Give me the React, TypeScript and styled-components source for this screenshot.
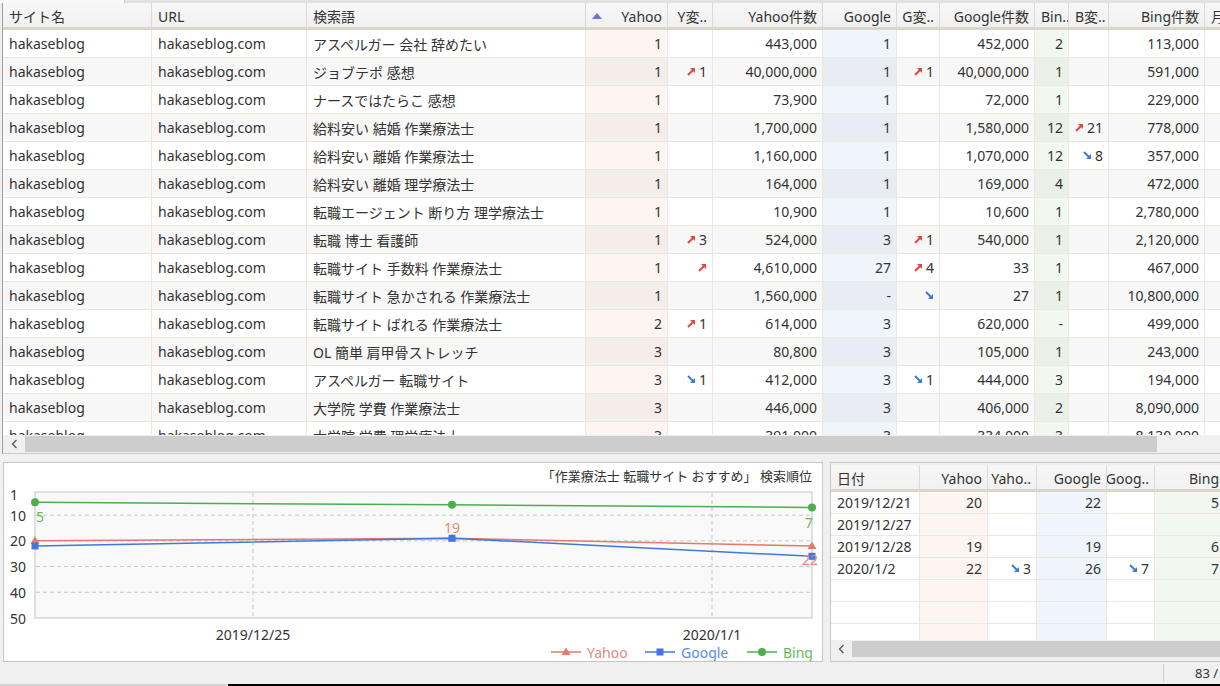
import React from 'react';
import styled, { createGlobalStyle } from 'styled-components';

const GlobalStyle = createGlobalStyle`
  * { box-sizing: border-box; }
  html, body {
    margin: 0;
    padding: 0;
    background: #f0f0f0;
  }
  body {
    font-family: "Noto Sans", "Noto Sans CJK JP", sans-serif;
    font-size: 14px;
    color: #333;
    overflow: hidden;
  }
`;

type Tint = 'none' | 'yahoo' | 'google' | 'bing';
type Change = { dir: 'up' | 'down'; n?: number } | null;

const tintColors: Record<Tint, string> = {
  none: '#ffffff',
  yahoo: '#fdf5f1',
  google: '#f0f4fb',
  bing: '#f2f8ef',
};

const Window = styled.div`
  width: 1220px;
  height: 686px;
  display: flex;
  flex-direction: column;
  background: #f0f0f0;
  overflow: hidden;
`;

const TabStrip = styled.div`
  height: 3px;
  display: flex;
  background: #e2e2e2;
`;

const ActiveTab = styled.div`
  width: 125px;
  background: #fafafa;
  border-right: 1px solid #d0d0d0;
`;

const MainPanel = styled.div`
  height: 451px;
  margin-left: 2px;
  border-left: 1px solid #9f9f9f;
  border-bottom: 1px solid #c8c8c8;
  display: flex;
  flex-direction: column;
`;

const GridClip = styled.div`
  flex: 1;
  overflow: hidden;
  background: #fff;
  min-height: 0;
`;

const Row = styled.div<{ $cols: string; $h: number }>`
  display: grid;
  grid-template-columns: ${p => p.$cols};
  height: ${p => p.$h}px;
`;

const HeaderRow = styled(Row)`
  background: linear-gradient(#f7f7f7, #f1f1f1);
  border-bottom: 3px solid #dad6cb;
`;

const HeadCell = styled.div<{ $align?: 'left' | 'right' }>`
  display: flex;
  align-items: center;
  justify-content: ${p => (p.$align === 'right' ? 'flex-end' : 'flex-start')};
  padding: 2px ${p => (p.$align === 'right' ? '5px' : '6px')} 0;
  border-right: 1px solid #d9d9d9;
  white-space: nowrap;
  overflow: hidden;
  min-width: 0;
`;

const SortHead = styled(HeadCell)`
  justify-content: space-between;
  padding-left: 6px;
`;

const Cell = styled.div<{ $align?: 'left' | 'right'; $tint?: Tint; $stripe?: boolean }>`
  display: flex;
  align-items: center;
  justify-content: ${p => (p.$align === 'right' ? 'flex-end' : 'flex-start')};
  padding: 0 ${p => (p.$align === 'right' ? '5px' : '6px')};
  border-right: 1px solid #ede8df;
  border-bottom: 1px solid #ede8df;
  background-color: ${p => tintColors[p.$tint ?? 'none']};
  background-image: ${p =>
    p.$stripe ? 'linear-gradient(rgba(0,0,0,0.03), rgba(0,0,0,0.03))' : 'none'};
  white-space: nowrap;
  overflow: hidden;
  min-width: 0;
`;

const ChangeWrap = styled.span`
  display: inline-flex;
  align-items: center;
  gap: 3px;
`;

const Scrollbar = styled.div`
  height: 18px;
  flex-shrink: 0;
  display: flex;
  background: #f0f0f0;
`;

const ScrollArrow = styled.div<{ $w: number }>`
  width: ${p => p.$w}px;
  display: flex;
  align-items: center;
  justify-content: center;
`;

const Thumb = styled.div<{ $w?: number }>`
  ${p => (p.$w ? `width: ${p.$w}px;` : 'flex: 1;')}
  margin: 1px 0;
  background: #cdcdcd;
`;

const BottomArea = styled.div`
  height: 200px;
  margin-top: 8px;
  display: flex;
`;

const ChartPanel = styled.div`
  width: 820px;
  margin-left: 3px;
  background: #fff;
  border: 1px solid #c6c6c6;
  flex-shrink: 0;
`;

const SidePanel = styled.div`
  flex: 1;
  min-width: 0;
  margin-left: 7px;
  border: 1px solid #c6c6c6;
  border-right: none;
  padding: 2px 0 3px 0;
  display: flex;
  flex-direction: column;
  overflow: hidden;
`;

const StatusBar = styled.div`
  height: 22px;
  display: flex;
  justify-content: flex-end;
  padding: 2px 0;
`;

const StatusCell = styled.div`
  width: 57px;
  border-left: 1px solid #cfcfcf;
  padding-left: 31px;
  font-size: 13px;
  display: flex;
  align-items: center;
  white-space: nowrap;
`;

const EdgeLine = styled.div`
  height: 2px;
  display: flex;
`;

const EdgeLeft = styled.div`
  width: 228px;
  background: #d6d6d6;
`;

const EdgeRest = styled.div`
  flex: 1;
  background: #000;
`;

const ChangeArrow = ({ dir }: { dir: 'up' | 'down' }) =>
  dir === 'up' ? (
    <svg width="9" height="9" viewBox="0 0 9 9">
      <line x1="1" y1="8" x2="6" y2="3" stroke="#e2473b" strokeWidth="2" />
      <polygon points="3,1 8,1 8,6" fill="#e2473b" />
    </svg>
  ) : (
    <svg width="9" height="9" viewBox="0 0 9 9">
      <line x1="1" y1="1" x2="6" y2="6" stroke="#3a7bd5" strokeWidth="2" />
      <polygon points="8,3 8,8 3,8" fill="#3a7bd5" />
    </svg>
  );

const ChangeValue = ({ c }: { c: Change }) =>
  c ? (
    <ChangeWrap>
      <ChangeArrow dir={c.dir} />
      {c.n !== undefined && <span>{c.n}</span>}
    </ChangeWrap>
  ) : null;

const Chevron = () => (
  <svg width="7" height="10" viewBox="0 0 7 10">
    <polyline points="5.5,1 1.5,5 5.5,9" fill="none" stroke="#555" strokeWidth="1.3" />
  </svg>
);

const SortArrow = () => (
  <svg width="10" height="6" viewBox="0 0 10 6">
    <polygon points="5,0 10,6 0,6" fill="#6d72e6" />
  </svg>
);

const mainCols = '149px 155px 279px 82px 45px 110px 74px 43px 95px 34px 40px 96px 60px';

type MainRow = {
  kw: string;
  y: string; yc: Change; yn: string;
  g: string; gc: Change; gn: string;
  b: string; bc: Change; bn: string;
};

const up = (n?: number): Change => ({ dir: 'up', n });
const down = (n?: number): Change => ({ dir: 'down', n });

const mainRows: MainRow[] = [
  { kw: 'アスペルガー 会社 辞めたい', y: '1', yc: null, yn: '443,000', g: '1', gc: null, gn: '452,000', b: '2', bc: null, bn: '113,000' },
  { kw: 'ジョブテポ 感想', y: '1', yc: up(1), yn: '40,000,000', g: '1', gc: up(1), gn: '40,000,000', b: '1', bc: null, bn: '591,000' },
  { kw: 'ナースではたらこ 感想', y: '1', yc: null, yn: '73,900', g: '1', gc: null, gn: '72,000', b: '1', bc: null, bn: '229,000' },
  { kw: '給料安い 結婚 作業療法士', y: '1', yc: null, yn: '1,700,000', g: '1', gc: null, gn: '1,580,000', b: '12', bc: up(21), bn: '778,000' },
  { kw: '給料安い 離婚 作業療法士', y: '1', yc: null, yn: '1,160,000', g: '1', gc: null, gn: '1,070,000', b: '12', bc: down(8), bn: '357,000' },
  { kw: '給料安い 離婚 理学療法士', y: '1', yc: null, yn: '164,000', g: '1', gc: null, gn: '169,000', b: '4', bc: null, bn: '472,000' },
  { kw: '転職エージェント 断り方 理学療法士', y: '1', yc: null, yn: '10,900', g: '1', gc: null, gn: '10,600', b: '1', bc: null, bn: '2,780,000' },
  { kw: '転職 博士 看護師', y: '1', yc: up(3), yn: '524,000', g: '3', gc: up(1), gn: '540,000', b: '1', bc: null, bn: '2,120,000' },
  { kw: '転職サイト 手数料 作業療法士', y: '1', yc: up(), yn: '4,610,000', g: '27', gc: up(4), gn: '33', b: '1', bc: null, bn: '467,000' },
  { kw: '転職サイト 急かされる 作業療法士', y: '1', yc: null, yn: '1,560,000', g: '-', gc: down(), gn: '27', b: '1', bc: null, bn: '10,800,000' },
  { kw: '転職サイト ばれる 作業療法士', y: '2', yc: up(1), yn: '614,000', g: '3', gc: null, gn: '620,000', b: '-', bc: null, bn: '499,000' },
  { kw: 'OL 簡単 肩甲骨ストレッチ', y: '3', yc: null, yn: '80,800', g: '3', gc: null, gn: '105,000', b: '1', bc: null, bn: '243,000' },
  { kw: 'アスペルガー 転職サイト', y: '3', yc: down(1), yn: '412,000', g: '3', gc: down(1), gn: '444,000', b: '3', bc: null, bn: '194,000' },
  { kw: '大学院 学費 作業療法士', y: '3', yc: null, yn: '446,000', g: '3', gc: null, gn: '406,000', b: '2', bc: null, bn: '8,090,000' },
  { kw: '大学院 学費 理学療法士', y: '3', yc: null, yn: '391,000', g: '3', gc: null, gn: '334,000', b: '3', bc: null, bn: '8,130,000' },
];

const sideCols = '89px 68px 49px 70px 48px 70px 60px';

type SideRow = { date: string; y: string; yc: Change; g: string; gc: Change; b: string };

const sideRows: SideRow[] = [
  { date: '2019/12/21', y: '20', yc: null, g: '22', gc: null, b: '5' },
  { date: '2019/12/27', y: '', yc: null, g: '', gc: null, b: '' },
  { date: '2019/12/28', y: '19', yc: null, g: '19', gc: null, b: '6' },
  { date: '2020/1/2', y: '22', yc: down(3), g: '26', gc: down(7), b: '7' },
  { date: '', y: '', yc: null, g: '', gc: null, b: '' },
  { date: '', y: '', yc: null, g: '', gc: null, b: '' },
  { date: '', y: '', yc: null, g: '', gc: null, b: '' },
];

const rankY = (r: number) => 30 + (r - 1) * (126 / 49);
const pointX = [32, 449, 809];

const series = [
  { name: 'Yahoo', color: '#e5796a', text: '#e8887a', ranks: [20, 19, 22], marker: 'tri' },
  { name: 'Google', color: '#3f78df', text: '#5b8ae6', ranks: [22, 19, 26], marker: 'sq' },
  { name: 'Bing', color: '#4cae4c', text: '#6ab85a', ranks: [5, 6, 7], marker: 'dot' },
];

const Marker = ({ kind, x, y, color }: { kind: string; x: number; y: number; color: string }) => {
  if (kind === 'tri') return <polygon points={`${x},${y - 4.5} ${x - 4.5},${y + 3} ${x + 4.5},${y + 3}`} fill={color} />;
  if (kind === 'sq') return <rect x={x - 3.5} y={y - 3.5} width="7" height="7" fill={color} />;
  return <circle cx={x} cy={y} r="4" fill={color} />;
};

const RankChart = () => (
  <svg width="818" height="198" viewBox="1 1 818 198">
    <text x="809" y="14" textAnchor="end" dominantBaseline="central" fontSize="13" fill="#333">
      「作業療法士 転職サイト おすすめ」 検索順位
    </text>
    <rect x="32" y="30" width="777" height="126" fill="#f9f9f9" stroke="#c4c4c4" />
    {[10, 20, 30, 40].map(r => (
      <line key={r} x1="33" x2="808" y1={rankY(r)} y2={rankY(r)} stroke="#c6c6c6" strokeDasharray="4 3" />
    ))}
    {[250, 709].map(x => (
      <line key={x} x1={x} x2={x} y1="31" y2="155" stroke="#c6c6c6" strokeDasharray="4 3" />
    ))}
    {[1, 10, 20, 30, 40, 50].map(r => (
      <text key={r} x="7" y={r === 1 ? 32 : rankY(r)} dominantBaseline="central" fontSize="14" fill="#333">
        {r}
      </text>
    ))}
    <text x="250" y="172" textAnchor="middle" dominantBaseline="central" fontSize="14" fill="#333">2019/12/25</text>
    <text x="709" y="172" textAnchor="middle" dominantBaseline="central" fontSize="14" fill="#333">2020/1/1</text>
    {series.map(s => (
      <g key={s.name}>
        <polyline
          points={s.ranks.map((r, i) => `${pointX[i]},${rankY(r)}`).join(' ')}
          fill="none"
          stroke={s.color}
          strokeWidth="1.5"
        />
        {s.ranks.map((r, i) => (
          <Marker key={i} kind={s.marker} x={pointX[i]} y={rankY(r)} color={s.color} />
        ))}
      </g>
    ))}
    <text x="33" y="54" dominantBaseline="central" fontSize="14" fill="#6ab85a">5</text>
    <text x="449" y="65" textAnchor="middle" dominantBaseline="central" fontSize="14" fill="#e8887a">19</text>
    <text x="810" y="60" textAnchor="end" dominantBaseline="central" fontSize="14" fill="#6ab85a">7</text>
    <text x="807" y="97" textAnchor="middle" dominantBaseline="central" fontSize="14" fill="#e8887a">22</text>
    {series.map((s, i) => {
      const lx = [548, 642, 744][i];
      return (
        <g key={s.name}>
          <line x1={lx} x2={lx + 30} y1="190" y2="190" stroke={s.color} strokeWidth="1.5" />
          <Marker kind={s.marker} x={lx + 15} y={190} color={s.color} />
          <text x={lx + 36} y="190" dominantBaseline="central" fontSize="14" fill={s.text}>
            {s.name}
          </text>
        </g>
      );
    })}
  </svg>
);

const App: React.FC = () => {
  return (
    <Window>
      <GlobalStyle />
      <TabStrip>
        <ActiveTab />
      </TabStrip>

      <MainPanel>
        <GridClip>
          <HeaderRow $cols={mainCols} $h={27}>
            <HeadCell>サイト名</HeadCell>
            <HeadCell>URL</HeadCell>
            <HeadCell>検索語</HeadCell>
            <SortHead $align="right">
              <SortArrow />
              <span>Yahoo</span>
            </SortHead>
            <HeadCell $align="right">Y変..</HeadCell>
            <HeadCell $align="right">Yahoo件数</HeadCell>
            <HeadCell $align="right">Google</HeadCell>
            <HeadCell $align="right">G変..</HeadCell>
            <HeadCell $align="right">Google件数</HeadCell>
            <HeadCell>Bin..</HeadCell>
            <HeadCell>B変..</HeadCell>
            <HeadCell $align="right">Bing件数</HeadCell>
            <HeadCell>月</HeadCell>
          </HeaderRow>
          {mainRows.map((r, i) => {
            const s = i % 2 === 1;
            return (
              <Row key={i} $cols={mainCols} $h={28}>
                <Cell $stripe={s}>hakaseblog</Cell>
                <Cell $stripe={s}>hakaseblog.com</Cell>
                <Cell $stripe={s}>{r.kw}</Cell>
                <Cell $stripe={s} $align="right" $tint="yahoo">{r.y}</Cell>
                <Cell $stripe={s} $align="right"><ChangeValue c={r.yc} /></Cell>
                <Cell $stripe={s} $align="right">{r.yn}</Cell>
                <Cell $stripe={s} $align="right" $tint="google">{r.g}</Cell>
                <Cell $stripe={s} $align="right"><ChangeValue c={r.gc} /></Cell>
                <Cell $stripe={s} $align="right">{r.gn}</Cell>
                <Cell $stripe={s} $align="right" $tint="bing">{r.b}</Cell>
                <Cell $stripe={s} $align="right"><ChangeValue c={r.bc} /></Cell>
                <Cell $stripe={s} $align="right">{r.bn}</Cell>
                <Cell $stripe={s} />
              </Row>
            );
          })}
        </GridClip>
        <Scrollbar>
          <ScrollArrow $w={22}><Chevron /></ScrollArrow>
          <Thumb $w={1132} />
        </Scrollbar>
      </MainPanel>

      <BottomArea>
        <ChartPanel>
          <RankChart />
        </ChartPanel>
        <SidePanel>
          <GridClip>
            <HeaderRow $cols={sideCols} $h={27}>
              <HeadCell>日付</HeadCell>
              <HeadCell $align="right">Yahoo</HeadCell>
              <HeadCell $align="right">Yaho..</HeadCell>
              <HeadCell $align="right">Google</HeadCell>
              <HeadCell $align="right">Goog..</HeadCell>
              <HeadCell $align="right">Bing</HeadCell>
              <HeadCell />
            </HeaderRow>
            {sideRows.map((r, i) => (
              <Row key={i} $cols={sideCols} $h={22}>
                <Cell>{r.date}</Cell>
                <Cell $align="right" $tint="yahoo">{r.y}</Cell>
                <Cell $align="right"><ChangeValue c={r.yc} /></Cell>
                <Cell $align="right" $tint="google">{r.g}</Cell>
                <Cell $align="right"><ChangeValue c={r.gc} /></Cell>
                <Cell $align="right" $tint="bing">{r.b}</Cell>
                <Cell />
              </Row>
            ))}
          </GridClip>
          <Scrollbar>
            <ScrollArrow $w={21}><Chevron /></ScrollArrow>
            <Thumb />
          </Scrollbar>
        </SidePanel>
      </BottomArea>

      <StatusBar>
        <StatusCell>83 /</StatusCell>
      </StatusBar>
      <EdgeLine>
        <EdgeLeft />
        <EdgeRest />
      </EdgeLine>
    </Window>
  );
};

export default App;
